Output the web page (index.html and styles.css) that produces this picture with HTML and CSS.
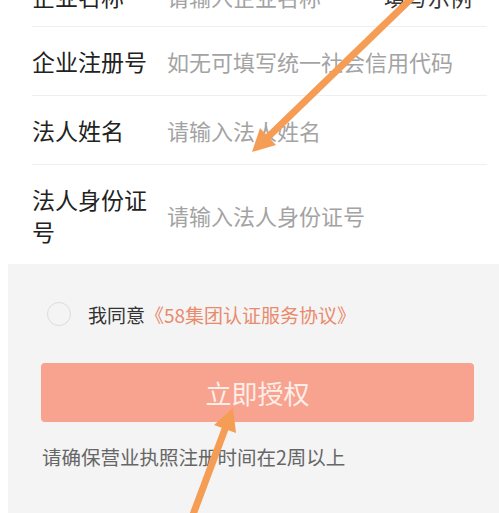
FILE: index.html
```html
<!DOCTYPE html>
<html lang="zh-CN">
<head>
    <meta charset="UTF-8">
    <meta name="viewport" content="width=device-width, initial-scale=1.0">
    <title>企业认证</title>
    <link rel="stylesheet" href="styles.css">
</head>
<body>
    <div class="form">
        <div class="row row-first">
            <div class="label">企业名称</div>
            <div class="value">请输入企业名称</div>
            <div class="extra">填写示例</div>
        </div>
        <div class="row">
            <div class="label">企业注册号</div>
            <div class="value">如无可填写统一社会信用代码</div>
        </div>
        <div class="row">
            <div class="label">法人姓名</div>
            <div class="value">请输入法人姓名</div>
        </div>
        <div class="row row-last">
            <div class="label">法人身份证号</div>
            <div class="value">请输入法人身份证号</div>
        </div>
    </div>

    <div class="panel">
        <div class="agree">
            <span class="radio"></span>
            <span>我同意</span><span class="link">《58集团认证服务协议》</span>
        </div>
        <button class="submit">立即授权</button>
        <p class="note">请确保营业执照注册时间在2周以上</p>
    </div>

    <!-- annotation arrows drawn over the screenshot -->
    <svg class="arrows" width="499" height="513" viewBox="0 0 499 513">
        <line x1="418" y1="-8" x2="268" y2="137" stroke="#f59d55" stroke-width="7" stroke-linecap="round"/>
        <polygon points="252,152 276,145 260,128" fill="#f59d55"/>
        <line x1="191" y1="520" x2="225" y2="429" stroke="#f59d55" stroke-width="7" stroke-linecap="round"/>
        <polygon points="233,408 236,433 214,425" fill="#f59d55"/>
    </svg>
</body>
</html>
```

FILE: styles.css
```css
body {
    margin: 0;
    font-family: "Noto Sans CJK SC", "Noto Sans", sans-serif;
    background: #fff;
    overflow: hidden;
    position: relative;
    width: 499px;
    height: 513px;
}
.form {
    padding-left: 32px;
}
.row {
    display: flex;
    align-items: center;
    margin-right: 12px;
    padding: 18px 0;
    border-bottom: 1px solid #efefef;
    font-size: 22px;
    line-height: 32px;
}
.row-first {
    margin-top: -38px;
    padding-bottom: 14px;
}
.row-last {
    border-bottom: none;
    padding-bottom: 17px;
}
.label {
    width: 118px;
    flex-shrink: 0;
    color: #222;
    font-size: 23px;
}
.value {
    margin-left: 17px;
    color: #a3a3a3;
    flex: 1;
}
.extra {
    color: #333;
    margin-right: 15px;
}
.panel {
    margin-left: 8px;
    background: #f4f4f4;
    padding: 38px 25px 60px 33px;
}
.agree {
    display: flex;
    align-items: center;
    height: 24px;
    padding-left: 6px;
    font-size: 19px;
    color: #333;
}
.radio {
    width: 22px;
    height: 22px;
    border: 1px solid #dcdcdc;
    border-radius: 50%;
    margin-right: 17px;
    box-sizing: content-box;
}
.link {
    color: #e98a6d;
}
.submit {
    display: block;
    width: 100%;
    height: 59px;
    margin-top: 37px;
    border: none;
    border-radius: 4px;
    background: #f8a290;
    color: #fdeee8;
    font-family: inherit;
    font-size: 26px;
}
.note {
    margin: 22px 0 0 1px;
    font-size: 19.5px;
    line-height: 26px;
    color: #666;
}
.arrows {
    position: absolute;
    left: 0;
    top: 0;
    pointer-events: none;
}
```
